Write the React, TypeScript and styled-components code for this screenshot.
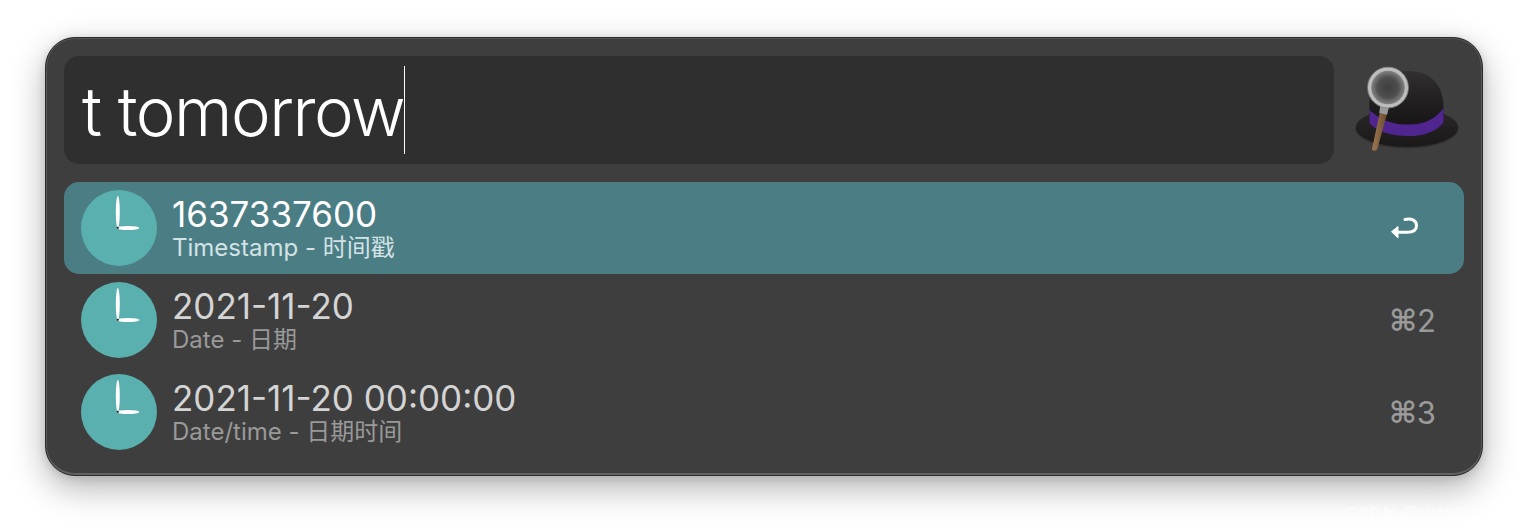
import React from "react";
import styled, { createGlobalStyle } from "styled-components";

const Global = createGlobalStyle`
  html, body { margin: 0; padding: 0; background: #ffffff; height: 530px; overflow: hidden; }
  body { font-family: Inter, "Noto Sans CJK SC", sans-serif; }
`;

const Page = styled.div`
  position: relative;
  width: 1528px;
  height: 530px;
  padding: 37px 0 0 45px;
  box-sizing: border-box;
`;

const Window = styled.div`
  width: 1438px;
  height: 439px;
  box-sizing: border-box;
  padding: 18px;
  border: 1px solid #2c2c2c;
  border-radius: 30px;
  background: #3e3e3e;
  box-shadow: inset 0 1px 0 #555, inset 0 -2px 0 #626262, inset 1px 0 0 #585858, inset -1px 0 0 #585858,
    0 12px 34px rgba(0, 0, 0, 0.3), 0 2px 10px rgba(0, 0, 0, 0.12);
  display: flex;
  flex-direction: column;
`;

const TopRow = styled.div`
  display: flex;
  height: 108px;
  margin-bottom: 18px;
`;

const SearchBox = styled.div`
  flex: 1;
  display: flex;
  align-items: center;
  padding-left: 18px;
  background: #2f2f2f;
  border-radius: 15px;
`;

const Query = styled.span`
  font-size: 67px;
  font-weight: 300;
  color: #ffffff;
  letter-spacing: -1.5px;
  line-height: 108px;
  margin-top: 4px;
  white-space: nowrap;
`;

const Caret = styled.span`
  width: 1px;
  height: 88px;
  background: #ffffff;
`;

const HatSlot = styled.div`
  width: 130px;
  display: flex;
  align-items: flex-start;
  justify-content: flex-start;
`;

const Results = styled.div`
  display: flex;
  flex-direction: column;
`;

const Row = styled.div<{ $selected?: boolean }>`
  height: 92px;
  display: flex;
  align-items: center;
  padding: 0 28px 0 17px;
  gap: 15px;
  border-radius: 15px;
  background: ${(p) => (p.$selected ? "#4b7d85" : "transparent")};
`;

const ClockIcon = styled.svg`
  width: 76px;
  height: 76px;
  flex: none;
`;

const TextBlock = styled.div`
  flex: 1;
  display: flex;
  flex-direction: column;
`;

const Title = styled.div<{ $selected?: boolean }>`
  font-size: 35px;
  line-height: 38px;
  font-weight: 400;
  color: ${(p) => (p.$selected ? "#ffffff" : "#d4d4d4")};
`;

const Subtitle = styled.div<{ $selected?: boolean }>`
  font-size: 24px;
  line-height: 28px;
  margin-top: 1px;
  font-weight: 400;
  color: ${(p) => (p.$selected ? "#d3e2e4" : "#999999")};
`;

const Shortcut = styled.div`
  font-size: 30px;
  font-weight: 700;
  color: #9a9a9a;
  display: flex;
  align-items: center;
  font-family: "DejaVu Sans", Inter, sans-serif;
`;

const ShortcutDigit = styled.span`
  font-family: Inter, sans-serif;
  font-size: 31px;
  font-weight: 400;
`;

const ReturnIcon = styled.svg`
  width: 32px;
  height: 30px;
  margin-right: 15px;
  flex: none;
`;

const Watermark = styled.div`
  position: absolute;
  left: 1345px;
  top: 500px;
  font-size: 18px;
  color: rgba(255, 255, 255, 0.6);
  font-family: Inter, "Noto Sans CJK SC", sans-serif;
  white-space: nowrap;
`;

const Clock = () => (
  <ClockIcon viewBox="0 0 76 76">
    <circle cx="38" cy="38" r="38" fill="#5ab0ae" />
    <ellipse cx="36.8" cy="22" rx="2" ry="16" fill="#ffffff" />
    <ellipse cx="47" cy="38" rx="11.5" ry="2" fill="#ffffff" />
    <circle cx="36.8" cy="37.8" r="1.1" fill="#1c1c1c" />
  </ClockIcon>
);

const Hat = () => (
  <svg width="116" height="94" viewBox="0 0 116 94" style={{ marginLeft: 17, marginTop: 6 }}>
    <defs>
      <linearGradient id="crown" x1="0" y1="0" x2="0" y2="1">
        <stop offset="0" stopColor="#312f2f" />
        <stop offset="0.6" stopColor="#1d1b1b" />
        <stop offset="1" stopColor="#141212" />
      </linearGradient>
      <linearGradient id="brim" x1="0" y1="0" x2="0" y2="1">
        <stop offset="0" stopColor="#2a2828" />
        <stop offset="1" stopColor="#1a1818" />
      </linearGradient>
      <radialGradient id="lens" cx="0.5" cy="0.5" r="0.5">
        <stop offset="0" stopColor="#3f3f3f" />
        <stop offset="0.55" stopColor="#4e4e4e" />
        <stop offset="0.85" stopColor="#7a7a7a" />
        <stop offset="1" stopColor="#a0a0a0" />
      </radialGradient>
      <linearGradient id="wood" x1="0" y1="0" x2="1" y2="0">
        <stop offset="0" stopColor="#9c7750" />
        <stop offset="1" stopColor="#6c4c30" />
      </linearGradient>
    </defs>
    <ellipse cx="57.5" cy="67" rx="53" ry="20.5" fill="#2d2b2b" opacity="0.7" />
    <ellipse cx="57.5" cy="66" rx="52.5" ry="20" fill="url(#brim)" />
    <path d="M19 40 C19 18 36 8 58 8 C82 8 95 22 95 46 L95 62 C84 76 32 78 19 62 Z" fill="url(#crown)" />
    <path d="M19 48 C30 58 42 63 59 63 C76 63 87 57 95 46 L95 61 C88 70 74 74.7 59 74.7 C42 74.7 28 71 19 62 Z" fill="#50258f" />
    <path d="M29.5 51 L37 52 L27 88 C26 90.5 22 90.5 21.5 88 Z" fill="url(#wood)" />
    <path d="M30.5 40 L40 41 L37 53 L29 51 Z" fill="#9a9a9a" />
    <circle cx="38" cy="25" r="19" fill="url(#lens)" stroke="#bdbdbd" strokeWidth="3.5" />
    <circle cx="38" cy="25" r="21" fill="none" stroke="#858585" strokeWidth="0.8" />
  </svg>
);

const rows = [
  { title: "1637337600", sub: "Timestamp - 时间戳", key: "" },
  { title: "2021-11-20", sub: "Date - 日期", key: "2" },
  { title: "2021-11-20 00:00:00", sub: "Date/time - 日期时间", key: "3" },
];

export default function App() {
  return (
    <>
      <Global />
      <Page>
        <Window>
          <TopRow>
            <SearchBox>
              <Query>t tomorrow</Query>
              <Caret />
            </SearchBox>
            <HatSlot>
              <Hat />
            </HatSlot>
          </TopRow>
          <Results>
            {rows.map((r, i) => (
              <Row key={r.title} $selected={i === 0}>
                <Clock />
                <TextBlock>
                  <Title $selected={i === 0}>{r.title}</Title>
                  <Subtitle $selected={i === 0}>{r.sub}</Subtitle>
                </TextBlock>
                {i === 0 ? (
                  <ReturnIcon viewBox="0 0 32 30">
                    <path d="M16 6.5 C22 4.8 27.5 7 27.5 12.5 C27.5 17.5 23 19.3 18 19.3 L8 19.3" fill="none" stroke="#fff" strokeWidth="3" strokeLinecap="round" />
                    <path d="M2.5 18.7 L9 13.5 L9 25 Z" fill="#fff" stroke="#fff" strokeWidth="1" strokeLinejoin="round" />
                  </ReturnIcon>
                ) : (
                  <Shortcut>
                    ⌘<ShortcutDigit>{r.key}</ShortcutDigit>
                  </Shortcut>
                )}
              </Row>
            ))}
          </Results>
        </Window>
        <Watermark>CSDN @小竹笛</Watermark>
      </Page>
    </>
  );
}
